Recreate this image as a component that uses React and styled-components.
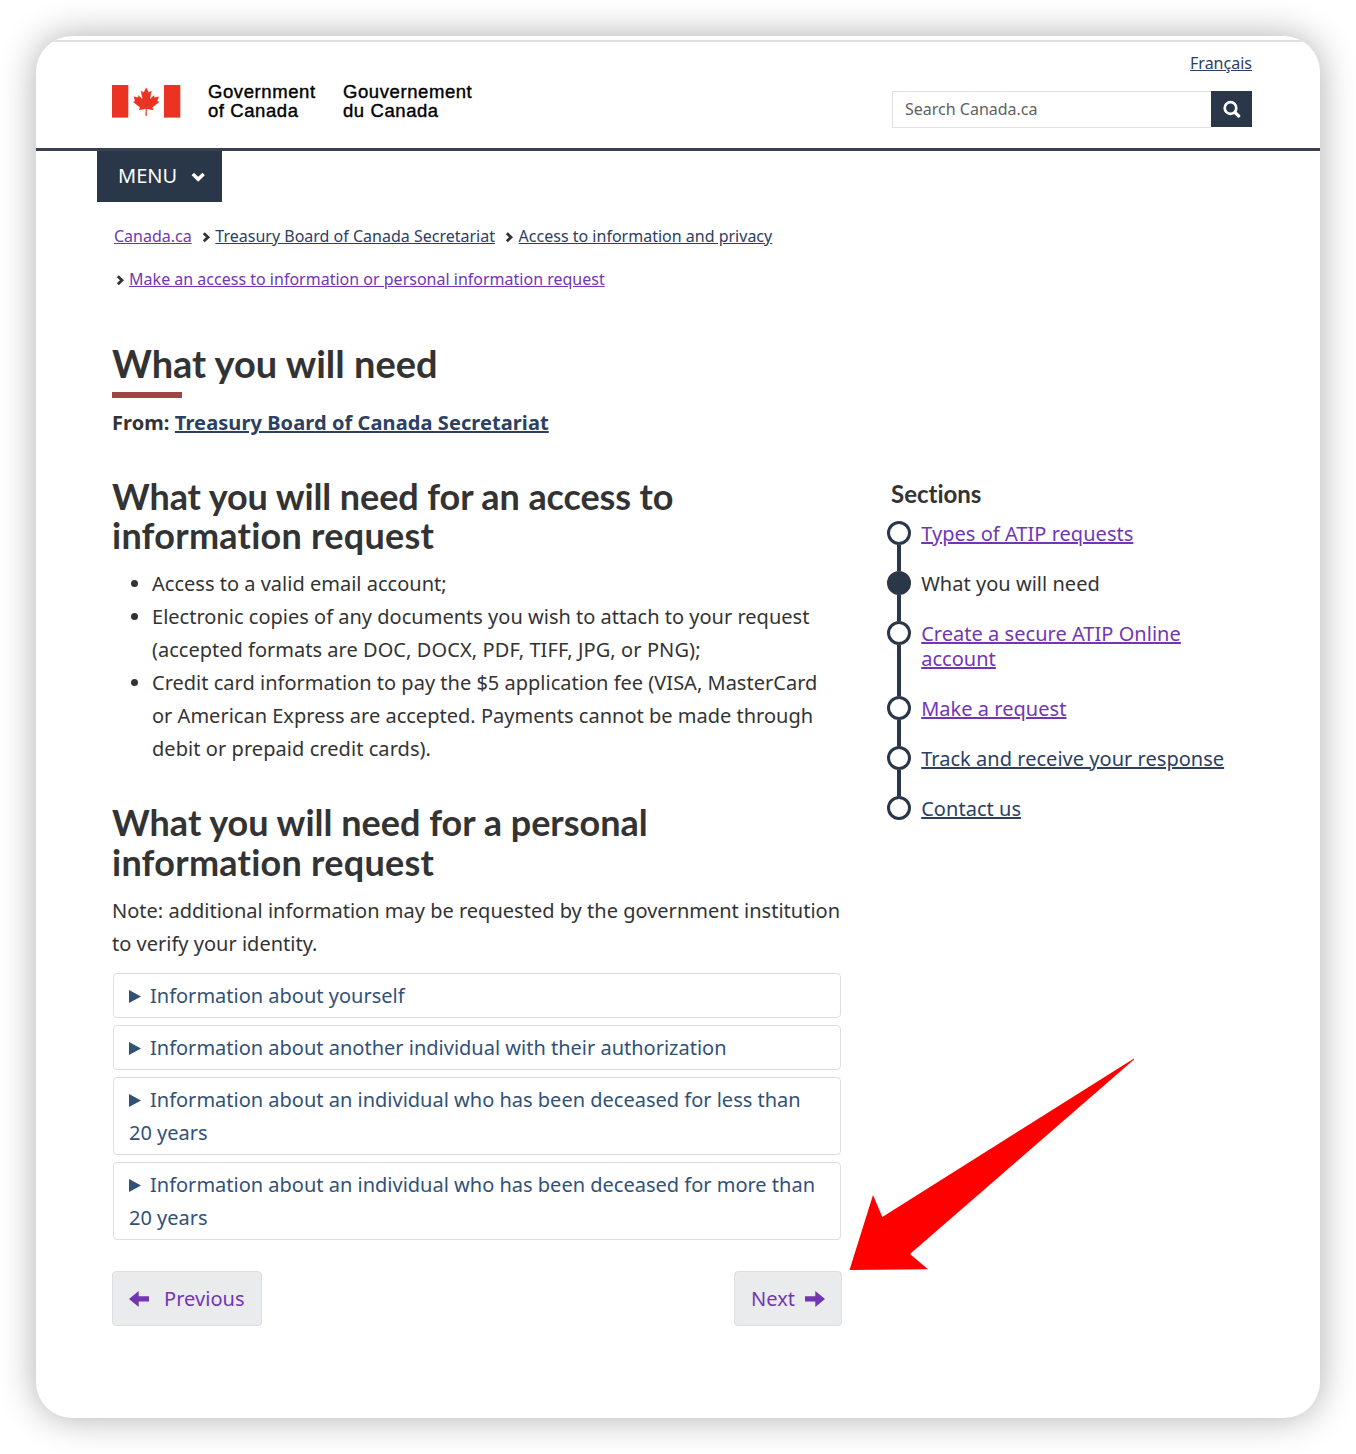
import React from "react";
import styled, { createGlobalStyle } from "styled-components";

const colors = {
  navy: "#2a3748",
  link: "#2b4062",
  visited: "#7236b5",
  summary: "#315176",
  text: "#333333",
};

const GlobalStyle = createGlobalStyle`
  *, *::before, *::after { box-sizing: border-box; }
  body {
    margin: 0;
    background: #fff;
    color: ${colors.text};
    font: 400 20px/33px "Noto Sans", sans-serif;
    letter-spacing: 0.01px;
  }
  h1, h2, h3, p, ul, ol { margin: 0; padding: 0; }
  h1, h2, h3 { letter-spacing: 0; }
`;

const Page = styled.div`
  position: relative;
  height: 1454px;
  padding: 36px;
  overflow: hidden;
`;

const Card = styled.div`
  height: 1382px;
  border-radius: 36px;
  background: #fff;
  box-shadow: 0 0 36px rgba(0, 0, 0, 0.32);
`;

const Sheet = styled.div`
  height: 100%;
  border-radius: inherit;
  overflow: hidden;
  padding-top: 4px;
`;

const Header = styled.header`
  display: flex;
  justify-content: space-between;
  height: 111px;
  padding: 0 68px 0 76px;
  border-top: 2px solid #e0e0e0;
  border-bottom: 3px solid #3a404e;
`;

const Brand = styled.div`
  display: flex;
  align-items: flex-start;
  padding-top: 43px;
`;

const Flag = styled.svg`
  display: block;
  width: 69px;
  height: 33px;
  margin-right: 27px;
`;

const Wordmark = styled.div`
  width: ${(p) => p.$width}px;
  margin-top: -3px;
  color: #000;
  font: 400 18.5px/19px "Liberation Sans", Arial, sans-serif;
  letter-spacing: 0.58px;
  white-space: nowrap;
  -webkit-text-stroke: 0.4px #000;
`;

const Tools = styled.div`
  display: flex;
  flex-direction: column;
  align-items: flex-end;
  width: 360px;
  padding-top: 9px;
`;

const Link = styled.a`
  color: ${(p) => (p.$visited ? colors.visited : colors.link)};
  text-decoration: underline;
`;

const Language = styled(Link)`
  font-size: 16px;
  line-height: 24px;
`;

const Search = styled.form`
  display: flex;
  width: 100%;
  height: 37px;
  margin-top: 16px;
`;

const SearchInput = styled.input`
  flex: 1;
  min-width: 0;
  padding: 0 12px 2px;
  border: 1px solid #e0e0e0;
  border-right: 0;
  border-radius: 0;
  background: #fff;
  font: 400 16px/24px "Noto Sans", sans-serif;
  &::placeholder { color: #5f5f5f; opacity: 1; }
`;

const SearchButton = styled.button`
  display: grid;
  place-items: center;
  width: 41px;
  height: 36px;
  padding: 0;
  border: 0;
  background: ${colors.navy};
`;

const MenuButton = styled.button`
  display: flex;
  align-items: center;
  gap: 14px;
  width: 125px;
  height: 51px;
  margin-left: 61px;
  padding: 0 0 2px 21px;
  border: 0;
  background: ${colors.navy};
  color: #fff;
  font: 400 20px/33px "Noto Sans", sans-serif;
`;

const MenuChevron = styled.svg`
  width: 14px;
  height: 10px;
  margin-top: 2px;
`;

const Crumbs = styled.ol`
  display: flex;
  flex-wrap: wrap;
  width: 730px;
  margin: 13px 0 0 78px;
  list-style: none;
  font-size: 16px;
  line-height: 43px;
  letter-spacing: 0.004px;
`;

const Crumb = styled.li`
  display: flex;
  align-items: center;
  margin-right: 10px;
  white-space: nowrap;
`;

const CrumbChevron = styled.svg`
  width: 10px;
  height: 11px;
  margin: 1px 3.6px 0 ${(p) => (p.$first ? 1.5 : 0)}px;
`;

const Title = styled.h1`
  width: max-content;
  margin: 37px 0 0 76px;
  font: 700 38px/50px Lato, sans-serif;
  &::after {
    content: "";
    display: block;
    width: 70px;
    height: 6px;
    margin-top: 4px;
    background: #a24343;
  }
`;

const Byline = styled.p`
  margin: 8px 0 0 76px;
  font-weight: 700;
  letter-spacing: 0.085px;
`;

const Columns = styled.div`
  display: flex;
  justify-content: space-between;
  padding: 37.6px 68px 0 76px;
`;

const Main = styled.main`
  width: 730px;
`;

const Heading = styled.h2`
  margin-top: ${(p) => p.$top || 0}px;
  font: 700 36px/39.6px Lato, sans-serif;
  font-variant-ligatures: none;
`;

const Tracked = styled.span`
  letter-spacing: ${(p) => p.$by}px;
`;

const Needs = styled.ul`
  margin-top: 11.4px;
  padding-left: 40px;
`;

const Note = styled.p`
  margin-top: 12px;
  white-space: nowrap;
`;

const Panels = styled.div`
  display: flex;
  flex-direction: column;
  gap: 7px;
  margin: 12.6px 1px 0;
`;

const Panel = styled.div`
  padding: 5px 15px;
  border: 1px solid #dcdee1;
  border-radius: 4px;
  color: ${colors.summary};
  letter-spacing: 0;
`;

const Marker = styled.svg`
  width: 12px;
  height: 13px;
  margin-right: 9px;
`;

const Pager = styled.nav`
  display: flex;
  justify-content: space-between;
  margin-top: 31px;
`;

const PagerLink = styled.a`
  display: flex;
  align-items: center;
  gap: ${(p) => p.$gap}px;
  width: ${(p) => p.$width}px;
  height: 55px;
  padding: 0 16px;
  border: 1px solid #dcdee1;
  border-radius: 4px;
  background: #eaebed;
  color: ${colors.visited};
  letter-spacing: 0.05px;
`;

const ArrowIcon = styled.svg`
  width: 20px;
  height: 16px;
  margin-top: 1px;
`;

const Sidebar = styled.aside`
  width: 365px;
  padding-top: 3.4px;
`;

const SidebarTitle = styled.h3`
  margin-left: 4px;
  font: 700 24px/28px Lato, sans-serif;
  font-variant-ligatures: none;
`;

const Steps = styled.ol`
  margin-top: 13px;
  list-style: none;
`;

const Step = styled.li`
  display: flex;
  gap: 10.2px;
  line-height: 25px;
`;

const Rail = styled.div`
  display: flex;
  flex-direction: column;
  align-items: center;
`;

const Dot = styled.span`
  width: 24px;
  height: 24px;
  border: 3px solid ${colors.navy};
  border-radius: 50%;
  background: ${(p) => (p.$current ? colors.navy : "#fff")};
`;

const Line = styled.span`
  flex: 1;
  width: 4px;
  background: ${colors.navy};
`;

const StepText = styled.div`
  width: 320px;
  padding: 0 0 25px;
  letter-spacing: 0.03px;
`;

const Pointer = styled.svg`
  position: absolute;
  left: 848px;
  top: 1056px;
  width: 288px;
  height: 216px;
  pointer-events: none;
`;

const crumbs = [
  { label: "Canada.ca", visited: true },
  { label: "Treasury Board of Canada Secretariat" },
  { label: "Access to information and privacy" },
  { label: "Make an access to information or personal information request", visited: true, rowStart: true },
];

const panels = [
  "Information about yourself",
  "Information about another individual with their authorization",
  "Information about an individual who has been deceased for less than 20 years",
  "Information about an individual who has been deceased for more than 20 years",
];

const steps = [
  { label: "Types of ATIP requests", visited: true },
  { label: "What you will need", current: true },
  { label: "Create a secure ATIP Online account", visited: true },
  { label: "Make a request", visited: true },
  { label: "Track and receive your response" },
  { label: "Contact us" },
];

const CanadaFlag = () => (
  <Flag viewBox="0 0 69 33" fill="#eb3323">
    <rect width="16.3" height="32.6" />
    <rect x="52" width="16.3" height="32.6" />
    <path
      transform="translate(1.1 -0.1) scale(0.0069)"
      stroke="#eb3323"
      strokeWidth="50"
      d="m4890 4430-45-863a95 95 0 0 1 111-98l859 151-116-320a65 65 0 0 1 20-73l941-762-212-99a65 65 0 0 1-34-79l186-572-542 115a65 65 0 0 1-73-38l-105-247-423 454a65 65 0 0 1-111-57l204-1052-327 189a65 65 0 0 1-91-27l-332-652-332 652a65 65 0 0 1-91 27l-327-189 204 1052a65 65 0 0 1-111 57l-423-454-105 247a65 65 0 0 1-73 38l-542-115 186 572a65 65 0 0 1-34 79l-212 99 941 762a65 65 0 0 1 20 73l-116 320 859-151a95 95 0 0 1 111 98l-45 863z"
    />
  </Flag>
);

const Arrow = ({ left }) => (
  <ArrowIcon viewBox="0 0 20 16" fill={colors.visited}>
    <path d={left ? "M0 8L9.7 0V5.2H20V10.4H9.7V16Z" : "M20 8L10.3 0V5.2H0V10.4H10.3V16Z"} />
  </ArrowIcon>
);

export default function App() {
  return (
    <Page>
      <GlobalStyle />
      <Card>
        <Sheet>
          <Header>
            <Brand>
              <CanadaFlag />
              <Wordmark $width={135}>
                Government
                <br />
                of Canada
              </Wordmark>
              <Wordmark $width={130}>
                Gouvernement
                <br />
                du Canada
              </Wordmark>
            </Brand>
            <Tools>
              <Language>Français</Language>
              <Search>
                <SearchInput placeholder="Search Canada.ca" />
                <SearchButton type="button" aria-label="Search">
                  <svg width="18" height="18" viewBox="0 0 18 18" fill="none" stroke="#fff">
                    <circle cx="7.5" cy="8" r="5.8" strokeWidth="2.7" />
                    <path d="M12 12.5L15.7 16" strokeWidth="3.2" strokeLinecap="round" />
                  </svg>
                </SearchButton>
              </Search>
            </Tools>
          </Header>
          <MenuButton>
            MENU
            <MenuChevron viewBox="0 0 14 10" fill="none" stroke="#fff" strokeWidth="3.5">
              <path d="M1.8 2L7.2 7.2L12.6 2" />
            </MenuChevron>
          </MenuButton>
          <Crumbs>
            {crumbs.map((c, i) => (
              <Crumb key={c.label}>
                {i > 0 && (
                  <CrumbChevron $first={c.rowStart} viewBox="0 0 10 11" fill="none" stroke="#333" strokeWidth="2.8">
                    <path d="M1.8 1.2L6 5.2L1.8 9.2" />
                  </CrumbChevron>
                )}
                <Link $visited={c.visited}>{c.label}</Link>
              </Crumb>
            ))}
          </Crumbs>
          <Title>What you will need</Title>
          <Byline>
            From: <Link>Treasury Board of Canada Secretariat</Link>
          </Byline>
          <Columns>
            <Main>
              <Heading>
                <Tracked $by={-0.1}>What you will need for an access to</Tracked>
                <br />
                <Tracked $by={0.25}>information request</Tracked>
              </Heading>
              <Needs>
                <li>Access to a valid email account;</li>
                <li>
                  Electronic copies of any documents you wish to attach to your request (accepted formats are{" "}
                  <Tracked $by={0.09}>DOC, DOCX, PDF, TIFF, JPG, or PNG);</Tracked>
                </li>
                <li>
                  Credit card information to pay the $5 application fee (VISA, MasterCard or American Express are
                  accepted. Payments cannot be made through <Tracked $by={0.06}>debit or prepaid credit cards).</Tracked>
                </li>
              </Needs>
              <Heading $top={38}>
                What you will need for a personal
                <br />
                <Tracked $by={0.25}>information request</Tracked>
              </Heading>
              <Note>
                Note: additional information may be requested by the government institution
                <br />
                to verify your identity.
              </Note>
              <Panels>
                {panels.map((p) => (
                  <Panel key={p}>
                    <Marker viewBox="0 0 12 13" fill={colors.summary}>
                      <path d="M0 0L12 6.5L0 13Z" />
                    </Marker>
                    {p}
                  </Panel>
                ))}
              </Panels>
              <Pager>
                <PagerLink $gap={15} $width={150}>
                  <Arrow left />
                  Previous
                </PagerLink>
                <PagerLink $gap={9.5} $width={108}>
                  Next
                  <Arrow />
                </PagerLink>
              </Pager>
            </Main>
            <Sidebar>
              <SidebarTitle>Sections</SidebarTitle>
              <Steps>
                {steps.map((s, i) => (
                  <Step key={s.label}>
                    <Rail>
                      <Dot $current={s.current} />
                      {i < steps.length - 1 && <Line />}
                    </Rail>
                    <StepText>{s.current ? s.label : <Link $visited={s.visited}>{s.label}</Link>}</StepText>
                  </Step>
                ))}
              </Steps>
            </Sidebar>
          </Columns>
        </Sheet>
      </Card>
      <Pointer viewBox="848 1056 288 216">
        <path
          fill="#ff0000"
          d="M1134 1058.5L882.3 1217L873 1195L849.5 1270L928 1269.2L910 1254L1134 1059.5Z"
        />
      </Pointer>
    </Page>
  );
}
